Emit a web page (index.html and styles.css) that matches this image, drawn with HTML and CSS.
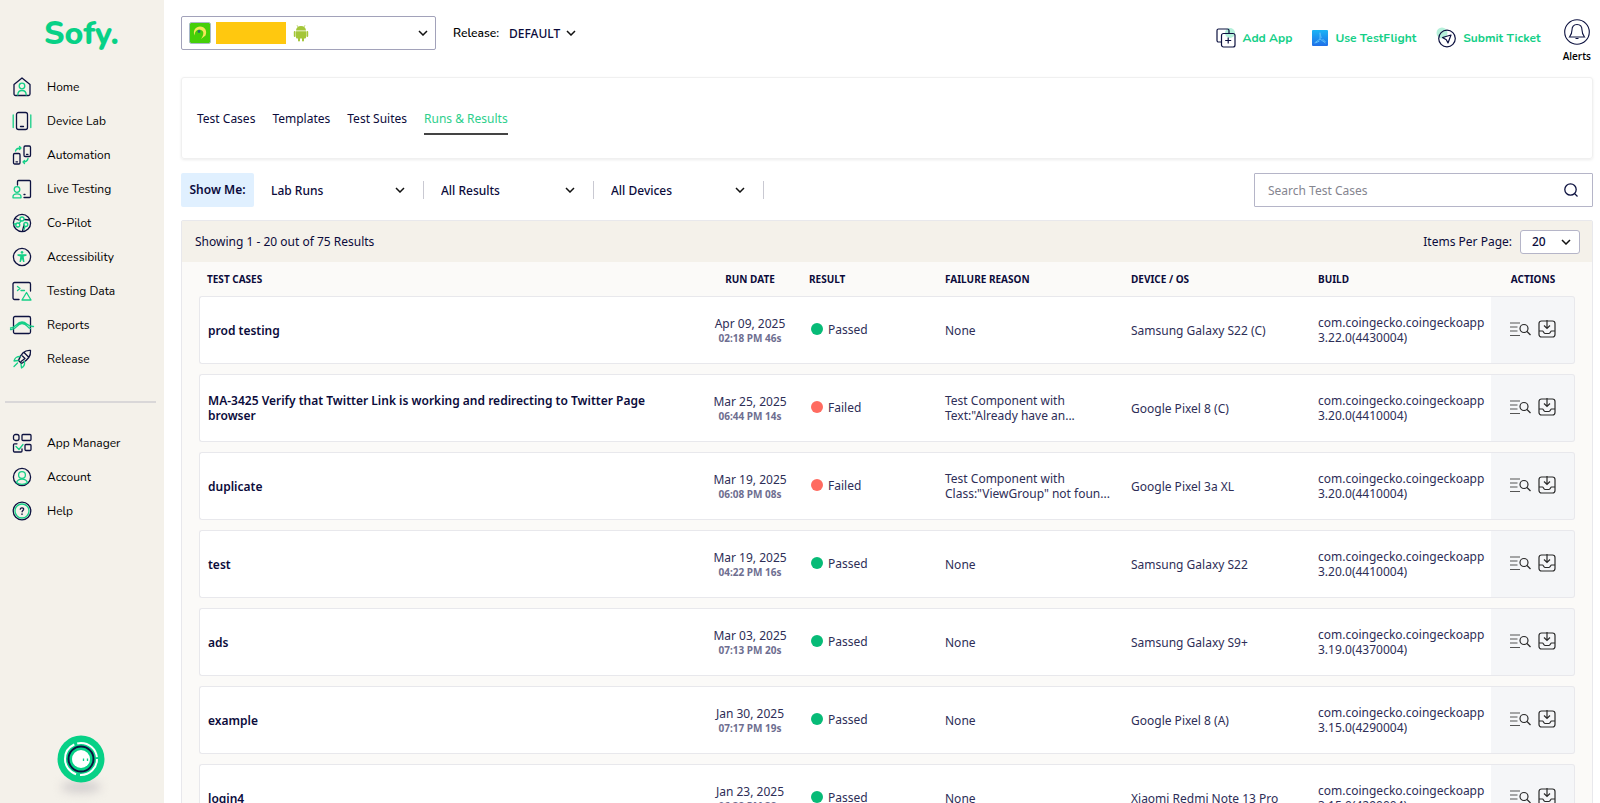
FILE: index.html
```html
<!DOCTYPE html>
<html lang="en">
<head>
<meta charset="utf-8">
<title>Sofy - Runs &amp; Results</title>
<link rel="stylesheet" href="styles.css">
</head>
<body>
<svg class="sprite" aria-hidden="true">
  <symbol id="logs" viewBox="0 0 21 18"><path d="M0 3h10M0 7h7.500M0 11h7.500M0 15.500h10" stroke="#555"/><circle cx="14" cy="8.500" r="4" stroke="#2b2b2b"/><path d="M17 11.500l3.500 3.500" stroke="#2b2b2b"/></symbol>
  <symbol id="inbox" viewBox="0 0 18 18"><rect x="1" y="1" width="16" height="16" rx="2.500"/><path d="M9 0v8M6 5.500L9 8.500l3-3M1 11h3.500c1 0 1 2.500 2.500 2.500h4c1.500 0 1.500-2.500 2.500-2.500H17"/></symbol>
</svg>
<div class="app">
  <aside class="sidebar">
    <a class="logo" href="#">Sofy.</a>
    <nav class="nav">
      <a href="#"><svg viewBox="0 0 20 20"><path d="M2 7.500L10 1l8 6.500V17a1.500 1.500 0 0 1-1.500 1.500h-13A1.500 1.500 0 0 1 2 17z"/><g class="green"><circle cx="10" cy="9" r="2.800"/><path d="M5.800 18c0-6 8.400-6 8.400 0"/></g></svg>Home</a>
      <a href="#"><svg viewBox="0 0 20 20"><rect x="4.500" y="1.500" width="11" height="17" rx="2"/><path d="M8.500 15.500h3"/><path class="green" d="M1.200 4v12.500M18.800 4v12.500"/></svg>Device Lab</a>
      <a href="#"><svg viewBox="0 0 20 20"><rect x="1.500" y="8.500" width="6.500" height="10.500" rx="1.200"/><rect x="12" y="1" width="6.500" height="10.500" rx="1.200"/><path d="M4 16.800h1.500M14.500 9.300H16"/><path class="green" d="M3.500 6c.5-2 2-3 5.500-3M7.500 1.500L9 3 7.500 4.500M16 13.500c-.5 2.500-2 3.500-5 3.500M12.500 15.500L11 17l1.500 1.500"/></svg>Automation</a>
      <a href="#"><svg viewBox="0 0 20 20"><path d="M5.500 6V2.500a1 1 0 0 1 1-1h11a1 1 0 0 1 1 1v15a1 1 0 0 1-1 1H12M12 15.500h1"/><g class="green"><circle cx="5" cy="10.500" r="2.800"/><path d="M1 18.800v-1c0-4 8-4 8 0v1z"/></g></svg>Live Testing</a>
      <a href="#"><svg viewBox="0 0 20 20"><circle cx="10" cy="10" r="8.600"/><path d="M3 5.500l4 1.500M12.500 6.500l5 .5M10.500 18l1.500-6"/><g class="green"><circle cx="10" cy="6" r="2"/><circle cx="5.800" cy="12" r="2"/><circle cx="13.800" cy="11.500" r="2"/><path d="M9 8l-2 2.500M13 13.500l-1 3M2 11h2"/></g></svg>Co-Pilot</a>
      <a href="#"><svg viewBox="0 0 20 20"><circle cx="10" cy="10" r="8.600"/><path class="fill" d="M10 4a1.400 1.400 0 1 0 .01 0M5.500 7.300h9v1.400l-2.800.8.800 5.500h-1.300L10 12l-1.200 3H7.500l.8-5.500-2.800-.8z"/></svg>Accessibility</a>
      <a href="#"><svg viewBox="0 0 20 20"><path d="M7 18.500H2.500a1.500 1.500 0 0 1-1.500-1.500V3a1.500 1.500 0 0 1 1.500-1.500H17A1.500 1.500 0 0 1 18.500 3v7"/><path class="green" d="M5.500 5.500l2.500 2-2.500 2M9 9.500h3.500M14.500 11.500l4.500 7.500h-9z"/></svg>Testing Data</a>
      <a href="#"><svg viewBox="0 0 20 20"><rect x="1.500" y="1.500" width="17" height="17" rx="1.500"/><path class="green" d="M-1.500 14.500c6 1 6-6 11.500-6s5 4.500 8.500 5M-1.500 13c5.500 0 6-6 11.500-6s5 5 11.500 4.500"/></svg>Reports</a>
      <a href="#"><svg viewBox="0 0 20 20"><path d="M18.500 1.500c-5-.5-9.500 3-12 10l3 3c6-3 9.500-7.500 9-13zM12 3.500l4.500 4.500"/><path d="M10.500 7l2.500 2.500-4 3"/><path class="green" d="M8 7.500c-4 0-5 1.500-6 4.500l4-.5M12.500 12.500c.5 3-.5 5-3 6.500l-.5-4M5.500 14L2 17.500"/></svg>Release</a>
    </nav>
    <hr class="rule">
    <nav class="nav">
      <a href="#"><svg viewBox="0 0 20 20"><rect x="1.500" y="1.500" width="5.500" height="6" rx="2"/><rect x="10" y="1.500" width="9" height="6" rx="1"/><rect x="13" y="11.500" width="6" height="6" rx="1"/><path d="M5 10.800H2.500a1 1 0 0 0-1 1V18a1 1 0 0 0 1 1H9a1 1 0 0 0 1-1v-2"/><path class="green" d="M4 13.500l3 3 4-5"/></svg>App Manager</a>
      <a href="#"><svg viewBox="0 0 20 20"><circle cx="10" cy="10" r="8.600"/><g class="green"><circle cx="10" cy="8" r="3.400"/><path d="M4.500 15.500c1.500-4.500 9.500-4.500 11 0-3 2.500-8 2.500-11 0z"/></g></svg>Account</a>
      <a href="#"><svg viewBox="0 0 20 20"><circle cx="10" cy="10" r="8.800"/><circle class="green" cx="10" cy="10" r="7"/><path d="M8.300 8.200c.3-2 3.600-1.600 3.300.2-.2 1-1.500 1.200-1.500 2.400M10 12.800v.6"/></svg>Help</a>
    </nav>
    <button class="chat" aria-label="Open assistant"><svg viewBox="0 0 48 48"><circle cx="24" cy="24" r="23.500" fill="#07d186"/><circle cx="24" cy="24" r="16" fill="none" stroke="#fff" stroke-width="2" stroke-dasharray="26 4 38 3 27 3"/><circle cx="24" cy="24" r="12.500" fill="none" stroke="#0b1340" stroke-width="2"/><circle cx="24" cy="24" r="9" fill="#fff"/><path d="M26.500 23.500v2.500M30.500 23.500v2.500" stroke="#07d186" stroke-width="1.300"/></svg></button>
  </aside>

  <main class="main">
    <header class="topbar">
      <button class="app-picker" aria-label="Choose app">
        <svg class="app-icon" viewBox="0 0 22 22"><rect x=".5" y=".5" width="21" height="21" rx="2" fill="#45cf08" stroke="#a9b8c9"/><path d="M5.500 13.500C3.500 8 7 4.500 11 4.500c5 0 7.500 4.500 5.500 9L12 17c3-4 3-8 .5-8.800C9 6.500 6 8.500 5.500 13.500z" fill="#f4e75a"/><circle cx="10" cy="9.500" r="1.400" fill="#2b6b73"/></svg>
        <span class="app-name"></span>
        <svg class="android" viewBox="0 0 16 18"><path d="M3 6.500a5 4.500 0 0 1 10 0zM3 7.200h10v6.300a1 1 0 0 1-1 1H4a1 1 0 0 1-1-1zM5 14h2v2.500a1 1 0 0 1-2 0zM9 14h2v2.500a1 1 0 0 1-2 0z"/><rect x=".8" y="7" width="1.800" height="6" rx=".9"/><rect x="13.400" y="7" width="1.800" height="6" rx=".9"/><path d="M5 3L4 1.200M11 3l1-1.800" stroke="#a4c639" stroke-width=".7"/></svg>
        <svg class="chev" viewBox="0 0 10 6"><path d="M1 1l4 4 4-4"/></svg>
      </button>
      <label class="release" for="release">Release:</label>
      <span class="pick release-pick"><select id="release"><option>DEFAULT</option></select><svg class="chev" viewBox="0 0 10 6"><path d="M1 1l4 4 4-4"/></svg></span>
      <div class="links">
        <a href="#"><svg class="link-icon" viewBox="0 0 20 20"><circle cx="14" cy="5" r="5" fill="#b5f0da"/><path d="M5 14H2.500A1.500 1.500 0 0 1 1 12.500v-10A1.500 1.500 0 0 1 2.500 1h9A1.500 1.500 0 0 1 13 2.500V5"/><rect x="5.500" y="5.500" width="13.500" height="13.500" rx="2"/><path d="M12.200 9.500v6M9.200 12.500h6"/></svg>Add App</a>
        <a href="#"><svg class="flight-icon" viewBox="0 0 16 16"><defs><linearGradient id="sky" x2="0" y2="1"><stop stop-color="#1cb4f5"/><stop offset="1" stop-color="#1f6fe8"/></linearGradient></defs><rect width="16" height="16" rx="1" fill="url(#sky)"/><path d="M8 2.500V9l-5.500 4M8 9l5.500 4M8 3l1.200 5M3.500 13l4-2M13.500 12l-3-3" stroke="#5cbcf9" fill="none"/></svg>Use TestFlight</a>
        <a href="#"><svg class="link-icon" viewBox="0 0 20 20"><circle cx="6" cy="5" r="5.500" fill="#b5f0da"/><circle cx="11" cy="10.500" r="8.300"/><path d="M15 7l-3 8-1.700-3.200L6.500 9.500z"/></svg>Submit Ticket</a>
        <a class="alerts" href="#"><svg viewBox="0 0 26 26"><circle cx="13" cy="13" r="12.300"/><path d="M13 5.500c-3.500 0-5 2.500-5 5.500 0 3.500-.8 4.800-2.500 7h15c-1.700-2.200-2.500-3.500-2.500-7 0-3-1.500-5.500-5-5.500zM11.500 19.500h3"/></svg>Alerts</a>
      </div>
    </header>

    <nav class="tabs">
      <a href="#">Test Cases</a><a href="#">Templates</a><a href="#">Test Suites</a><a class="active" href="#">Runs &amp; Results</a>
    </nav>

    <div class="filters">
      <span class="show-me">Show Me:</span>
      <span class="pick filter"><select aria-label="Run type"><option>Lab Runs</option></select><svg class="chev" viewBox="0 0 10 6"><path d="M1 1l4 4 4-4"/></svg></span>
      <span class="pick filter"><select aria-label="Result"><option>All Results</option></select><svg class="chev" viewBox="0 0 10 6"><path d="M1 1l4 4 4-4"/></svg></span>
      <span class="pick filter"><select aria-label="Device"><option>All Devices</option></select><svg class="chev" viewBox="0 0 10 6"><path d="M1 1l4 4 4-4"/></svg></span>
      <div class="search">
        <input type="text" placeholder="Search Test Cases" aria-label="Search Test Cases">
        <svg viewBox="0 0 14 14"><circle cx="6.500" cy="6.500" r="5.700"/><path d="M10.500 10.500l3 3"/></svg>
      </div>
    </div>

    <section class="panel">
      <div class="panel-head">
        <span>Showing 1 - 20 out of 75 Results</span>
        <label for="per-page">Items Per Page:</label>
        <span class="pick per-page"><select id="per-page"><option>20</option></select><svg class="chev" viewBox="0 0 10 6"><path d="M1 1l4 4 4-4"/></svg></span>
      </div>
      <table class="runs">
        <colgroup><col><col class="c-date"><col class="c-result"><col class="c-reason"><col class="c-device"><col class="c-build"><col class="c-actions"></colgroup>
        <thead><tr><th class="name">TEST CASES</th><th class="date">RUN DATE</th><th>RESULT</th><th>FAILURE REASON</th><th>DEVICE / OS</th><th>BUILD</th><th class="actions">ACTIONS</th></tr></thead>
        <tbody>
          <tr><td class="name">prod testing</td><td class="date">Apr 09, 2025<small>02:18 PM 46s</small></td><td><span class="status passed">Passed</span></td><td>None</td><td>Samsung Galaxy S22 (C)</td><td>com.coingecko.coingeckoapp<br>3.22.0(4430004)</td><td class="actions"><div class="acts"><button aria-label="View logs"><svg class="logs"><use href="#logs"/></svg></button><button aria-label="Download"><svg class="inbox"><use href="#inbox"/></svg></button></div></td></tr>
          <tr><td class="name">MA-3425 Verify that Twitter Link is working and redirecting to Twitter Page browser</td><td class="date">Mar 25, 2025<small>06:44 PM 14s</small></td><td><span class="status failed">Failed</span></td><td>Test Component with<br>Text:"Already have an...</td><td>Google Pixel 8 (C)</td><td>com.coingecko.coingeckoapp<br>3.20.0(4410004)</td><td class="actions"><div class="acts"><button aria-label="View logs"><svg class="logs"><use href="#logs"/></svg></button><button aria-label="Download"><svg class="inbox"><use href="#inbox"/></svg></button></div></td></tr>
          <tr><td class="name">duplicate</td><td class="date">Mar 19, 2025<small>06:08 PM 08s</small></td><td><span class="status failed">Failed</span></td><td>Test Component with<br>Class:"ViewGroup" not foun...</td><td>Google Pixel 3a XL</td><td>com.coingecko.coingeckoapp<br>3.20.0(4410004)</td><td class="actions"><div class="acts"><button aria-label="View logs"><svg class="logs"><use href="#logs"/></svg></button><button aria-label="Download"><svg class="inbox"><use href="#inbox"/></svg></button></div></td></tr>
          <tr><td class="name">test</td><td class="date">Mar 19, 2025<small>04:22 PM 16s</small></td><td><span class="status passed">Passed</span></td><td>None</td><td>Samsung Galaxy S22</td><td>com.coingecko.coingeckoapp<br>3.20.0(4410004)</td><td class="actions"><div class="acts"><button aria-label="View logs"><svg class="logs"><use href="#logs"/></svg></button><button aria-label="Download"><svg class="inbox"><use href="#inbox"/></svg></button></div></td></tr>
          <tr><td class="name">ads</td><td class="date">Mar 03, 2025<small>07:13 PM 20s</small></td><td><span class="status passed">Passed</span></td><td>None</td><td>Samsung Galaxy S9+</td><td>com.coingecko.coingeckoapp<br>3.19.0(4370004)</td><td class="actions"><div class="acts"><button aria-label="View logs"><svg class="logs"><use href="#logs"/></svg></button><button aria-label="Download"><svg class="inbox"><use href="#inbox"/></svg></button></div></td></tr>
          <tr><td class="name">example</td><td class="date">Jan 30, 2025<small>07:17 PM 19s</small></td><td><span class="status passed">Passed</span></td><td>None</td><td>Google Pixel 8 (A)</td><td>com.coingecko.coingeckoapp<br>3.15.0(4290004)</td><td class="actions"><div class="acts"><button aria-label="View logs"><svg class="logs"><use href="#logs"/></svg></button><button aria-label="Download"><svg class="inbox"><use href="#inbox"/></svg></button></div></td></tr>
          <tr><td class="name">login4</td><td class="date">Jan 23, 2025<small>06:38 PM 38s</small></td><td><span class="status passed">Passed</span></td><td>None</td><td>Xiaomi Redmi Note 13 Pro</td><td>com.coingecko.coingeckoapp<br>3.15.0(4290004)</td><td class="actions"><div class="acts"><button aria-label="View logs"><svg class="logs"><use href="#logs"/></svg></button><button aria-label="Download"><svg class="inbox"><use href="#inbox"/></svg></button></div></td></tr>
        </tbody>
      </table>
    </section>
  </main>
</div>
</body>
</html>
```
FILE: styles.css
```css
* { box-sizing: border-box; }
body { margin: 0; font: 12px/16px "Noto Sans", sans-serif; color: #0b0b3b; background: #fff; }
a { color: inherit; text-decoration: none; }
button, select, input { font: inherit; color: inherit; margin: 0; border: 0; background: none; }
button { padding: 0; cursor: pointer; }
svg { display: block; flex: none; fill: none; }
.sprite { position: absolute; width: 0; height: 0; }
.app { display: flex; height: 100vh; overflow: hidden; }

.sidebar { position: relative; isolation: isolate; flex: none; width: 164px; background: #f4f1ea; color: #000; }
.logo { display: block; padding: 14px 0 0 44px; height: 70px; font: 800 32px/40px "Nunito", Lato, sans-serif; color: #07d186; }
.nav { display: flex; flex-direction: column; font-family: "Nunito", "Noto Sans", sans-serif; }
.nav a { display: flex; align-items: center; gap: 15px; height: 34px; padding-left: 12px; }
.nav svg { width: 20px; height: 20px; overflow: visible; stroke: #0d1240; stroke-width: 1.3; stroke-linecap: round; stroke-linejoin: round; }
.nav .green { stroke: #14cf87; }
.nav .fill { fill: #14cf87; stroke: none; }
.rule { height: 2px; margin: 25px 8px 23px 5px; border: 0; background: #d9d7d8; }
.chat { position: absolute; left: 57px; bottom: 20px; width: 48px; height: 48px; border-radius: 50%; }
.chat::after { content: ""; position: absolute; left: 4px; top: 46px; width: 40px; height: 12px; border-radius: 50%; background: #d3cfcf; filter: blur(5px); z-index: -1; }

.main { flex: 1; min-width: 0; padding: 0 7px 0 17px; overflow-y: auto; scrollbar-width: none; }
.topbar { display: flex; align-items: flex-start; height: 77px; padding-top: 16px; }
.app-picker { display: flex; align-items: center; width: 255px; height: 34px; padding: 0 7px; border: 1px solid #a2a2ba; border-radius: 2px; }
.app-icon { width: 22px; height: 22px; }
.app-name { width: 70px; height: 22px; margin: 0 7px 0 5px; background: #ffc80f; }
.android { width: 16px; height: 18px; fill: #a4c639; }
.chev { width: 10px; height: 6px; stroke: #111; stroke-width: 1.5; }
.app-picker .chev { margin-left: auto; }
.release { margin-left: 17px; line-height: 34px; font-family: "Nunito", "Noto Sans", sans-serif; font-weight: 600; color: #000; }
.pick { display: flex; align-items: center; }
.pick select { appearance: none; flex: 1; min-width: 0; padding: 1px 0 0; }
.release-pick { gap: 5px; height: 34px; margin-left: 10px; font-weight: 500; }
.links { display: flex; align-items: flex-start; margin-left: auto; gap: 20px; }
.links a { display: flex; align-items: center; gap: 7px; height: 44px; font: 700 12px/16px "Nunito", "Noto Sans", sans-serif; color: #14cf87; }
.links .link-icon { width: 20px; height: 20px; overflow: visible; stroke: #0d1240; stroke-width: 1.2; stroke-linejoin: round; }
.links .link-icon circle[fill] { stroke: none; }
.flight-icon { width: 16px; height: 16px; }
.links .alerts { flex-direction: column; gap: 3px; height: auto; padding: 3px 2px 0; font: 600 10px/16px "Open Sans", "Noto Sans", sans-serif; color: #000; }
.alerts svg { width: 26px; height: 26px; stroke: #0d1240; stroke-width: 1.1; }

.tabs { display: flex; align-items: center; gap: 17px; height: 82px; padding: 2px 15px 0; border: 1px solid #f0f0f0; border-radius: 3px; box-shadow: 0 1px 3px #ececec; }
.tabs a { padding: 8px 0 6px; border-bottom: 2px solid transparent; }
.tabs .active { color: #2dcf8c; border-color: #444; }

.filters { display: flex; align-items: center; height: 34px; margin: 14px 0 13px; font-weight: 500; }
.show-me { flex: none; width: 73px; line-height: 34px; text-align: center; font-weight: 600; background: #e0f0ff; border-radius: 2px; }
.filter { width: 170px; height: 18px; padding: 0 18px 0 17px; border-right: 1px solid #c9c9d2; }
.search { display: flex; align-items: center; width: 339px; height: 34px; margin-left: auto; padding: 0 14px 0 13px; border: 1px solid #b5b5c8; border-radius: 1px; font-weight: 400; }
.search input { flex: 1; min-width: 0; padding: 1px 0 0; outline: 0; }
.search input::placeholder { color: #85858f; }
.search svg { width: 14px; height: 14px; stroke: #0d1240; stroke-width: 1.3; }

.panel { border: 1px solid #e8e8ec; border-radius: 2px; background: #fbfaf8; }
.panel-head { display: flex; align-items: center; height: 41px; padding: 0 12px 0 13px; background: #f4f1ea; }
.panel-head label { margin-left: auto; }
.per-page { width: 60px; height: 24px; margin-left: 8px; padding: 0 8px 0 11px; border: 1px solid #b5b5c8; border-radius: 3px; background: #fff; font-weight: 500; }

.runs { width: calc(100% - 34px); margin: 0 17px; table-layout: fixed; border-collapse: separate; border-spacing: 0 10px; line-height: 15px; }
.c-date { width: 118px; }
.c-result { width: 136px; }
.c-reason { width: 186px; }
.c-device { width: 187px; }
.c-build { width: 173px; }
.c-actions { width: 84px; }
.runs th { height: 14px; padding: 0; font-size: 10px; line-height: 14px; font-weight: 700; text-align: left; }
.runs td { height: 68px; padding: 0; background: #fff; border: solid #e8e8ec; border-width: 1px 0; color: #2e2e57; }
.runs .name { padding-left: 8px; padding-right: 32px; }
.runs td.name { border-left-width: 1px; border-radius: 3px 0 0 3px; font-weight: 600; color: #0b0b3b; }
.runs .date { text-align: center; }
.runs td.date { padding-top: 2px; }
.runs small { display: block; font-size: 10px; font-weight: 700; color: #6e6e90; }
.runs .actions { text-align: center; }
.runs td.actions { padding-bottom: 2px; border-right-width: 1px; border-radius: 0 3px 3px 0; background: #f5f6f8; }
.status { display: flex; align-items: center; gap: 5px; padding: 0 0 2px 2px; }
.status::before { content: ""; width: 12px; height: 12px; border-radius: 50%; background: #07bb77; }
.failed::before { background: #ff6b60; }
.acts { display: flex; align-items: center; justify-content: center; gap: 7px; }
.acts svg { stroke: #2b2b2b; stroke-width: 1.2; height: 18px; }
.logs { width: 21px; }
.inbox { width: 18px; }
```
